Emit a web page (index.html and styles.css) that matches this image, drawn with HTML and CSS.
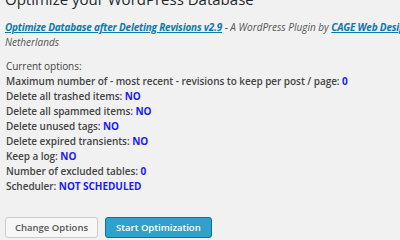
FILE: index.html
```html
<!DOCTYPE html>
<html>
<head>
<meta charset="utf-8">
<link rel="stylesheet" href="styles.css">
</head>
<body>
<div class="wrap">
  <h1 class="title">Optimize your WordPress Database</h1>
  <p class="intro"><a href="#">Optimize Database after Deleting Revisions v2.9</a> - A WordPress Plugin by <a href="#">CAGE Web Design</a> | Rolf van Gelder, Eindhoven, The<br>Netherlands</p>
  <div class="options">
    <div class="row">Current options:</div>
    <div class="row b">Maximum number of - most recent - revisions to keep per post / page: <span class="v">0</span></div>
    <div class="row b">Delete all trashed items: <span class="v">NO</span></div>
    <div class="row b">Delete all spammed items: <span class="v">NO</span></div>
    <div class="row b">Delete unused tags: <span class="v">NO</span></div>
    <div class="row b">Delete expired transients: <span class="v">NO</span></div>
    <div class="row b">Keep a log: <span class="v">NO</span></div>
    <div class="row b">Number of excluded tables: <span class="v">0</span></div>
    <div class="row b">Scheduler: <span class="v">NOT SCHEDULED</span></div>
  </div>
  <div class="actions">
    <button class="btn">Change Options</button>
    <button class="btn primary">Start Optimization</button>
  </div>
</div>
</body>
</html>
```
FILE: styles.css
```css
html, body { margin: 0; padding: 0; background: #f1f1f1; }
body { width: 400px; height: 240px; overflow: hidden; font-family: "Open Sans", sans-serif; color: #444; }
.wrap { padding: 0 0 0 5px; margin-top: -11px; }
.title { margin: 0; font-size: 15px; font-weight: 400; line-height: 20px; color: #23282d; white-space: nowrap; }
.intro { margin: 11px 0 0; font-size: 10px; font-style: italic; line-height: 15px; color: #555; white-space: nowrap; }
.intro a { color: #0a7aad; font-weight: 700; letter-spacing: -0.2px; }
.options { margin-top: 9px; font-size: 10px; line-height: 15px; padding-left: 1px; letter-spacing: -0.05px; }
.row.b { font-weight: 600; }
.v { color: #1a1aff; font-weight: 700; }
.actions { display: flex; gap: 7px; margin-top: 23px; }
.btn { font-family: "Open Sans", sans-serif; font-size: 9.5px; font-weight: 600; height: 21px; padding: 0 9px; border-radius: 3px; border: 1px solid #ccc; background: #f7f7f7; color: #555; }
.btn.primary { background: #2ea2cc; border-color: #0074a2; color: #fff; padding: 0 10px; }
```
